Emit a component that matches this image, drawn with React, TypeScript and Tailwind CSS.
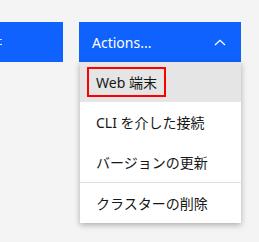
import { useState } from "react";

const items = ["Web 端末", "CLI を介した接続", "バージョンの更新", "クラスターの削除"];

export default function App() {
  const [open] = useState(true);

  return (
    <div
      className="w-[259px] h-[242px] bg-[#f4f4f4] overflow-hidden text-[#161616]"
      style={{ fontFamily: '"Noto Sans", "Noto Sans CJK JP", sans-serif' }}
    >
      <div className="flex pt-[22px] gap-[16px]">
        {/* tail of the previous button's label, clipped by the viewport */}
        <div className="w-[63px] h-[40px] bg-[#0f62fe] flex flex-col justify-center gap-[4px]">
          <span className="block w-[2px] h-[1px] bg-[#dcd0ff]" />
          <span className="block w-[2px] h-[1px] bg-[#f0f0ff]" />
        </div>

        <div className="relative w-[162px]">
          <button
            type="button"
            className="w-full h-[40px] bg-[#0f62fe] text-white text-[14px] flex items-center justify-between pl-[13px] pr-[15px]"
          >
            <span>Actions...</span>
            <svg width="12" height="7" viewBox="0 0 12 7" fill="none">
              <path d="M1 6L6 1.3L11 6" stroke="white" strokeWidth="1.3" />
            </svg>
          </button>

          {open && (
            <div className="absolute left-[1px] right-0 top-[40px] bg-white shadow-[0_2px_6px_rgba(0,0,0,0.3)] z-10">
              {items.map((label, i) => (
                <div
                  key={label}
                  className={`h-[40px] flex items-center text-[14px] ${
                    i === 0 ? "bg-[#e5e5e5] pl-[7px]" : "pl-[16px]"
                  } ${i === 3 ? "border-t border-[#e0e0e0] h-[41px]" : ""}`}
                >
                  {i === 0 ? (
                    <span className="border-2 border-[#ff0000] h-[30px] flex items-center px-[7px]">
                      {label}
                    </span>
                  ) : (
                    label
                  )}
                </div>
              ))}
            </div>
          )}
        </div>
      </div>
    </div>
  );
}
